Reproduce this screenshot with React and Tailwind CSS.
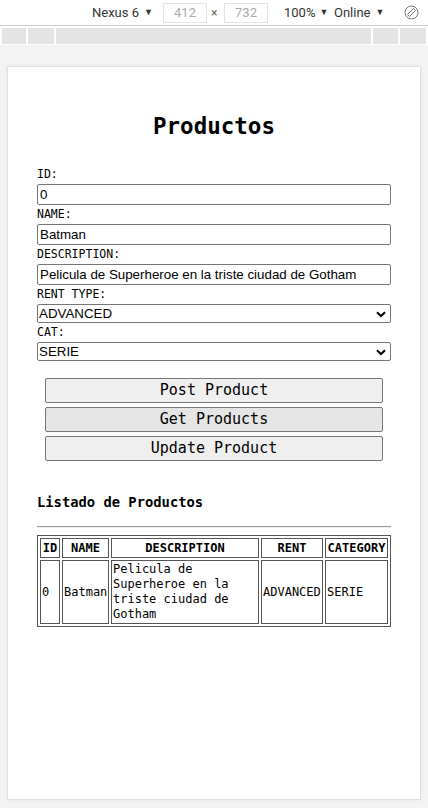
import React from 'react';

const mono = { fontFamily: '"DejaVu Sans Mono", "Liberation Mono", monospace' };
const sans = { fontFamily: '"Liberation Sans", Arial, sans-serif' };
const ui = { fontFamily: 'Roboto, "Liberation Sans", sans-serif' };

function Chevron() {
  return (
    <svg width="10" height="7" viewBox="0 0 10 7" className="absolute right-[4px] top-[6px]">
      <path d="M1 1.2 L5 5 L9 1.2" fill="none" stroke="#000" strokeWidth="2" />
    </svg>
  );
}

function Field({ label, value }) {
  return (
    <div className="flex flex-col">
      <label className="h-[19px] text-[11.5px] leading-[19px] text-black" style={mono}>{label}</label>
      <input
        readOnly
        value={value}
        className="h-[21px] w-full border border-[#767676] rounded-[2px] bg-white px-[2px] text-[13.33px] text-black outline-none"
        style={sans}
      />
    </div>
  );
}

function Select({ label, value }) {
  return (
    <div className="flex flex-col">
      <label className="h-[19px] text-[11.5px] leading-[19px] text-black" style={mono}>{label}</label>
      <div className="relative h-[19px] w-full border border-[#767676] rounded-[2px] bg-white pl-[1px] text-[13.33px] leading-[17px] text-black" style={sans}>
        {value}
        <Chevron />
      </div>
    </div>
  );
}

function Btn({ children, hover }) {
  return (
    <button
      className={`h-[25px] w-full border border-[#767676] rounded-[2px] text-[15px] text-black ${hover ? 'bg-[#e5e5e5]' : 'bg-[#efefef]'}`}
      style={mono}
    >
      {children}
    </button>
  );
}

function Toolbar() {
  return (
    <div className="h-[26px] bg-white border-b border-[#cccccc] flex items-center whitespace-nowrap text-[13px] text-[#333]" style={ui}>
      <div className="ml-[92px] w-[56px] shrink-0 flex items-center gap-[5px]">
        <span>Nexus 6</span><span className="text-[9px]">▼</span>
      </div>
      <div className="ml-[15px] w-[44px] shrink-0 h-[20px] border border-[#e3e3e3] text-[#aaa] flex items-center justify-center">412</div>
      <span className="ml-[4px] w-[11px] shrink-0 text-[#666] text-[12px]">×</span>
      <div className="ml-[2px] w-[44px] shrink-0 h-[20px] border border-[#e3e3e3] text-[#aaa] flex items-center justify-center">732</div>
      <div className="ml-[16px] w-[42px] shrink-0 flex items-center gap-[4px]">
        <span>100%</span><span className="text-[9px]">▼</span>
      </div>
      <div className="ml-[8px] w-[50px] shrink-0 flex items-center gap-[5px]">
        <span>Online</span><span className="text-[9px]">▼</span>
      </div>
      <svg className="ml-[20px] shrink-0" width="15" height="15" viewBox="0 0 15 15">
        <circle cx="7.5" cy="7.5" r="6.5" fill="none" stroke="#777" strokeWidth="1" />
        <path d="M3.5 9.5 L9.5 3.5 L11.5 5.5 L5.5 11.5 Z" fill="none" stroke="#777" strokeWidth="1" />
      </svg>
    </div>
  );
}

function MediaBar() {
  return (
    <div className="bg-white pt-[2px] pb-[1px]">
      <div className="h-[16px] flex gap-[2px] px-[2px]">
        <div className="w-[24px] bg-[#e4e4e4]" />
        <div className="w-[26px] bg-[#e4e4e4]" />
        <div className="flex-1 bg-[#e4e4e4]" />
        <div className="w-[25px] bg-[#e4e4e4]" />
        <div className="w-[26px] bg-[#e4e4e4]" />
      </div>
    </div>
  );
}

const th = 'border border-[#555] p-[1px] text-[12px] font-bold text-center leading-[16px]';
const td = 'border border-[#555] p-[1px] text-[12px] text-left leading-[15px] align-middle';

export default function App() {
  return (
    <div className="w-[428px] h-[808px] bg-[#f3f3f3] overflow-hidden">
      <Toolbar />
      <MediaBar />
      <div className="mt-[21px] ml-[7px] w-[414px] h-[734px] border border-[#e0e0e0] bg-white shadow-[0_0_3px_rgba(0,0,0,0.06)]">
        <div className="pt-[45px] px-[29px]" style={mono}>
          <h1 className="text-[22.5px] leading-[28px] font-bold text-center text-black">Productos</h1>
          <div className="mt-[25px] flex flex-col">
            <Field label="ID:" value="0" />
            <Field label="NAME:" value="Batman" />
            <Field label="DESCRIPTION:" value="Pelicula de Superheroe en la triste ciudad de Gotham" />
            <Select label="RENT TYPE:" value="ADVANCED" />
            <Select label="CAT:" value="SERIE" />
          </div>
          <div className="mt-[17px] mx-[8px] flex flex-col gap-[4px]">
            <Btn>Post Product</Btn>
            <Btn hover>Get Products</Btn>
            <Btn>Update Product</Btn>
          </div>
          <h3 className="mt-[31px] text-[13.8px] leading-[20px] font-bold text-black">Listado de Productos</h3>
          <hr className="mt-[14px] border-t border-t-[#9a9a9a] border-b border-b-[#eeeeee]" />
          <table className="mt-[7px] w-[354px] table-fixed border-separate border-spacing-[2px] border border-[#555] text-black">
            <colgroup>
              <col className="w-[20px]" />
              <col className="w-[47px]" />
              <col className="w-[148px]" />
              <col className="w-[62px]" />
              <col className="w-[63px]" />
            </colgroup>
            <thead>
              <tr>
                <th className={th}>ID</th>
                <th className={th}>NAME</th>
                <th className={th}>DESCRIPTION</th>
                <th className={th}>RENT</th>
                <th className={th}>CATEGORY</th>
              </tr>
            </thead>
            <tbody>
              <tr>
                <td className={td}>0</td>
                <td className={td}>Batman</td>
                <td className={td}>Pelicula de Superheroe en la triste ciudad de Gotham</td>
                <td className={td}>ADVANCED</td>
                <td className={td}>SERIE</td>
              </tr>
            </tbody>
          </table>
        </div>
      </div>
    </div>
  );
}
